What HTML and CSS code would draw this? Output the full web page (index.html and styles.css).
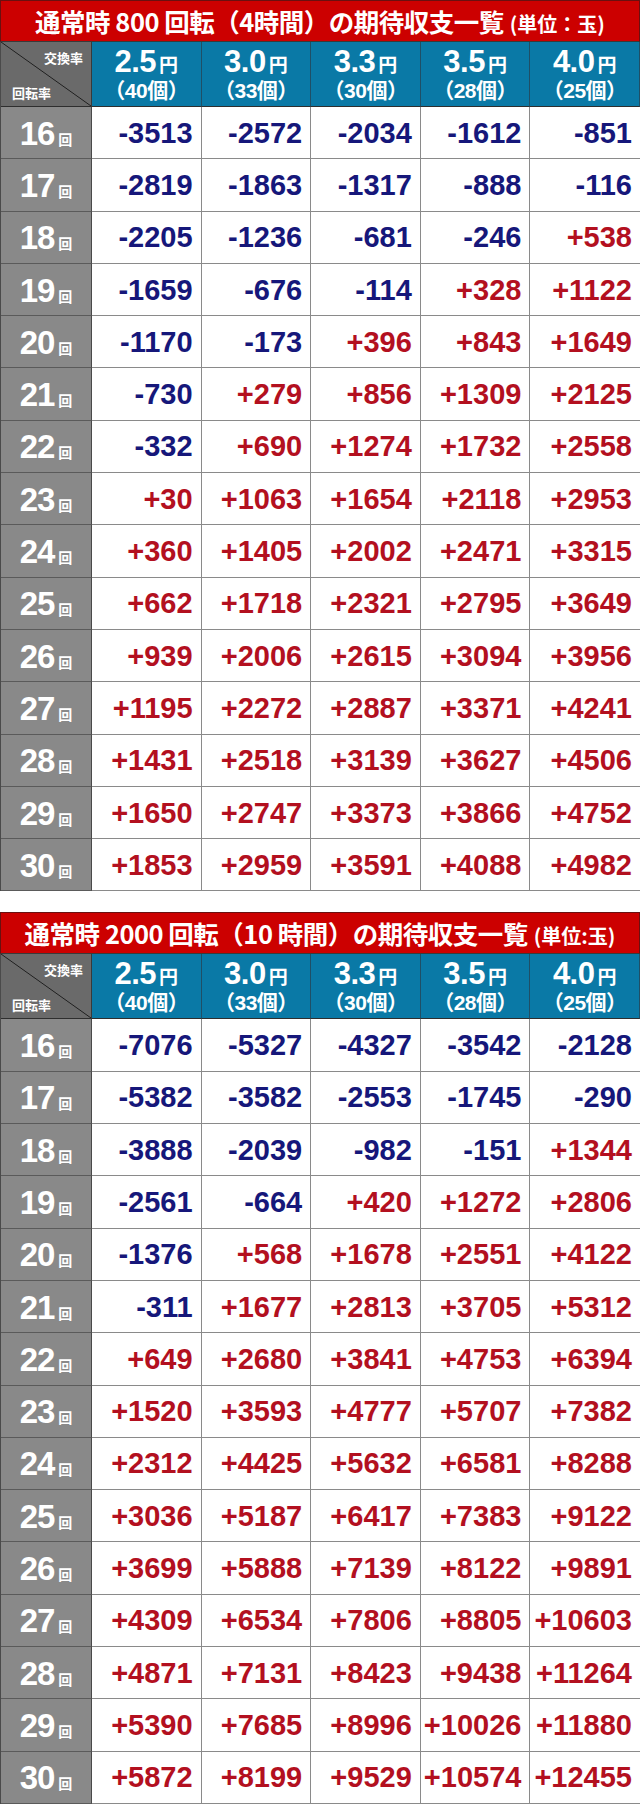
FILE: index.html
```html
<!DOCTYPE html>
<html lang="ja">
<head>
<meta charset="utf-8">
<title>期待収支一覧</title>
<link rel="stylesheet" href="styles.css">
</head>
<body>
<section class="board">
  <h2 class="title">通常時 800 回転（4時間）の期待収支一覧<span class="unit">(単位：玉)</span></h2>
  <div class="grid">
    <div class="corner"><span class="cx">交換率</span><span class="cy">回転率</span></div>
    <div class="rate"><div class="yen">2.5<small>円</small></div><div class="pcs">（40個）</div></div>
    <div class="rate"><div class="yen">3.0<small>円</small></div><div class="pcs">（33個）</div></div>
    <div class="rate"><div class="yen">3.3<small>円</small></div><div class="pcs">（30個）</div></div>
    <div class="rate"><div class="yen">3.5<small>円</small></div><div class="pcs">（28個）</div></div>
    <div class="rate"><div class="yen">4.0<small>円</small></div><div class="pcs">（25個）</div></div>

    <div class="lbl">16<small>回</small></div><div class="v neg">-3513</div><div class="v neg">-2572</div><div class="v neg">-2034</div><div class="v neg">-1612</div><div class="v neg">-851</div>
    <div class="lbl">17<small>回</small></div><div class="v neg">-2819</div><div class="v neg">-1863</div><div class="v neg">-1317</div><div class="v neg">-888</div><div class="v neg">-116</div>
    <div class="lbl">18<small>回</small></div><div class="v neg">-2205</div><div class="v neg">-1236</div><div class="v neg">-681</div><div class="v neg">-246</div><div class="v pos">+538</div>
    <div class="lbl">19<small>回</small></div><div class="v neg">-1659</div><div class="v neg">-676</div><div class="v neg">-114</div><div class="v pos">+328</div><div class="v pos">+1122</div>
    <div class="lbl">20<small>回</small></div><div class="v neg">-1170</div><div class="v neg">-173</div><div class="v pos">+396</div><div class="v pos">+843</div><div class="v pos">+1649</div>
    <div class="lbl">21<small>回</small></div><div class="v neg">-730</div><div class="v pos">+279</div><div class="v pos">+856</div><div class="v pos">+1309</div><div class="v pos">+2125</div>
    <div class="lbl">22<small>回</small></div><div class="v neg">-332</div><div class="v pos">+690</div><div class="v pos">+1274</div><div class="v pos">+1732</div><div class="v pos">+2558</div>
    <div class="lbl">23<small>回</small></div><div class="v pos">+30</div><div class="v pos">+1063</div><div class="v pos">+1654</div><div class="v pos">+2118</div><div class="v pos">+2953</div>
    <div class="lbl">24<small>回</small></div><div class="v pos">+360</div><div class="v pos">+1405</div><div class="v pos">+2002</div><div class="v pos">+2471</div><div class="v pos">+3315</div>
    <div class="lbl">25<small>回</small></div><div class="v pos">+662</div><div class="v pos">+1718</div><div class="v pos">+2321</div><div class="v pos">+2795</div><div class="v pos">+3649</div>
    <div class="lbl">26<small>回</small></div><div class="v pos">+939</div><div class="v pos">+2006</div><div class="v pos">+2615</div><div class="v pos">+3094</div><div class="v pos">+3956</div>
    <div class="lbl">27<small>回</small></div><div class="v pos">+1195</div><div class="v pos">+2272</div><div class="v pos">+2887</div><div class="v pos">+3371</div><div class="v pos">+4241</div>
    <div class="lbl">28<small>回</small></div><div class="v pos">+1431</div><div class="v pos">+2518</div><div class="v pos">+3139</div><div class="v pos">+3627</div><div class="v pos">+4506</div>
    <div class="lbl">29<small>回</small></div><div class="v pos">+1650</div><div class="v pos">+2747</div><div class="v pos">+3373</div><div class="v pos">+3866</div><div class="v pos">+4752</div>
    <div class="lbl">30<small>回</small></div><div class="v pos">+1853</div><div class="v pos">+2959</div><div class="v pos">+3591</div><div class="v pos">+4088</div><div class="v pos">+4982</div>
  </div>
</section>

<section class="board second">
  <h2 class="title">通常時 2000 回転（10 時間）の期待収支一覧<span class="unit">(単位:玉)</span></h2>
  <div class="grid">
    <div class="corner"><span class="cx">交換率</span><span class="cy">回転率</span></div>
    <div class="rate"><div class="yen">2.5<small>円</small></div><div class="pcs">（40個）</div></div>
    <div class="rate"><div class="yen">3.0<small>円</small></div><div class="pcs">（33個）</div></div>
    <div class="rate"><div class="yen">3.3<small>円</small></div><div class="pcs">（30個）</div></div>
    <div class="rate"><div class="yen">3.5<small>円</small></div><div class="pcs">（28個）</div></div>
    <div class="rate"><div class="yen">4.0<small>円</small></div><div class="pcs">（25個）</div></div>

    <div class="lbl">16<small>回</small></div><div class="v neg">-7076</div><div class="v neg">-5327</div><div class="v neg">-4327</div><div class="v neg">-3542</div><div class="v neg">-2128</div>
    <div class="lbl">17<small>回</small></div><div class="v neg">-5382</div><div class="v neg">-3582</div><div class="v neg">-2553</div><div class="v neg">-1745</div><div class="v neg">-290</div>
    <div class="lbl">18<small>回</small></div><div class="v neg">-3888</div><div class="v neg">-2039</div><div class="v neg">-982</div><div class="v neg">-151</div><div class="v pos">+1344</div>
    <div class="lbl">19<small>回</small></div><div class="v neg">-2561</div><div class="v neg">-664</div><div class="v pos">+420</div><div class="v pos">+1272</div><div class="v pos">+2806</div>
    <div class="lbl">20<small>回</small></div><div class="v neg">-1376</div><div class="v pos">+568</div><div class="v pos">+1678</div><div class="v pos">+2551</div><div class="v pos">+4122</div>
    <div class="lbl">21<small>回</small></div><div class="v neg">-311</div><div class="v pos">+1677</div><div class="v pos">+2813</div><div class="v pos">+3705</div><div class="v pos">+5312</div>
    <div class="lbl">22<small>回</small></div><div class="v pos">+649</div><div class="v pos">+2680</div><div class="v pos">+3841</div><div class="v pos">+4753</div><div class="v pos">+6394</div>
    <div class="lbl">23<small>回</small></div><div class="v pos">+1520</div><div class="v pos">+3593</div><div class="v pos">+4777</div><div class="v pos">+5707</div><div class="v pos">+7382</div>
    <div class="lbl">24<small>回</small></div><div class="v pos">+2312</div><div class="v pos">+4425</div><div class="v pos">+5632</div><div class="v pos">+6581</div><div class="v pos">+8288</div>
    <div class="lbl">25<small>回</small></div><div class="v pos">+3036</div><div class="v pos">+5187</div><div class="v pos">+6417</div><div class="v pos">+7383</div><div class="v pos">+9122</div>
    <div class="lbl">26<small>回</small></div><div class="v pos">+3699</div><div class="v pos">+5888</div><div class="v pos">+7139</div><div class="v pos">+8122</div><div class="v pos">+9891</div>
    <div class="lbl">27<small>回</small></div><div class="v pos">+4309</div><div class="v pos">+6534</div><div class="v pos">+7806</div><div class="v pos">+8805</div><div class="v pos">+10603</div>
    <div class="lbl">28<small>回</small></div><div class="v pos">+4871</div><div class="v pos">+7131</div><div class="v pos">+8423</div><div class="v pos">+9438</div><div class="v pos">+11264</div>
    <div class="lbl">29<small>回</small></div><div class="v pos">+5390</div><div class="v pos">+7685</div><div class="v pos">+8996</div><div class="v pos">+10026</div><div class="v pos">+11880</div>
    <div class="lbl">30<small>回</small></div><div class="v pos">+5872</div><div class="v pos">+8199</div><div class="v pos">+9529</div><div class="v pos">+10574</div><div class="v pos">+12455</div>
  </div>
</section>
</body>
</html>
```

FILE: styles.css
```css
* { box-sizing: border-box; }

html, body {
  margin: 0;
  padding: 0;
  background: #ffffff;
}

body {
  width: 640px;
  font-family: "Liberation Sans", "Noto Sans CJK JP", sans-serif;
}

.board {
  width: 640px;
}

.board.second {
  margin-top: 21px;
}

.title {
  margin: 0;
  height: 42px;
  background: #cc0000;
  border: 1px solid #6a1010;
  border-bottom: 1px solid #3a3a3a;
  color: #ffffff;
  font-family: "Noto Sans CJK JP", sans-serif;
  font-weight: 700;
  font-size: 25.5px;
  line-height: 40px;
  text-align: center;
  white-space: nowrap;
  letter-spacing: -0.5px;
}

.title .unit {
  font-size: 20px;
  margin-left: 6px;
  letter-spacing: 0;
}

.grid {
  display: grid;
  grid-template-columns: 91px repeat(5, 1fr);
  grid-template-rows: 65px repeat(15, 52.3px);
  border-left: 1px solid #4a4a4a;
}

.corner {
  position: relative;
  background:
    linear-gradient(to top right, transparent calc(50% - 0.8px), #1e1e1e 50%, transparent calc(50% + 0.8px)),
    #6a6a6a;
  border-right: 1px solid #3a3a3a;
  border-bottom: 1px solid #2e2e2e;
  color: #ffffff;
  font-family: "Noto Sans CJK JP", sans-serif;
  font-weight: 700;
  font-size: 13px;
}

.corner .cx {
  position: absolute;
  top: 6px;
  right: 8px;
}

.corner .cy {
  position: absolute;
  bottom: 4px;
  left: 11px;
}

.rate {
  background: #0a79a6;
  border-right: 1px solid #1f4f66;
  border-bottom: 1px solid #2e2e2e;
  color: #ffffff;
  font-weight: 700;
  text-align: center;
  display: flex;
  flex-direction: column;
  align-items: center;
  justify-content: center;
  padding-top: 1px;
}

.rate .yen {
  font-family: "Liberation Sans", sans-serif;
  font-size: 31px;
  line-height: 30px;
  letter-spacing: -0.5px;
}

.rate .yen small {
  font-family: "Noto Sans CJK JP", sans-serif;
  font-size: 19px;
  margin-left: 3px;
  letter-spacing: 0;
}

.rate .pcs {
  font-family: "Liberation Sans", "Noto Sans CJK JP", sans-serif;
  font-size: 21px;
  line-height: 24px;
  margin-top: 0;
  letter-spacing: -0.5px;
}

.lbl {
  background: #898989;
  border-right: 1px solid #4a4a4a;
  border-bottom: 1px solid #5a5a5a;
  color: #ffffff;
  font-weight: 700;
  font-size: 33px;
  display: flex;
  align-items: center;
  justify-content: center;
  padding-top: 2px;
  letter-spacing: -1px;
}

.lbl small {
  font-family: "Noto Sans CJK JP", sans-serif;
  font-size: 14px;
  margin-left: 4px;
  margin-top: 10px;
  letter-spacing: 0;
}

.v {
  background: #ffffff;
  border-right: 1px solid #8a8a8a;
  border-bottom: 1px solid #8a8a8a;
  font-weight: 700;
  font-size: 29px;
  display: flex;
  align-items: center;
  justify-content: flex-end;
  padding-right: 8px;
  padding-top: 1px;
  white-space: nowrap;
}

.v:nth-child(6n) {
  border-right: none;
}

.neg { color: #16177a; }
.pos { color: #b3101f; }
```
